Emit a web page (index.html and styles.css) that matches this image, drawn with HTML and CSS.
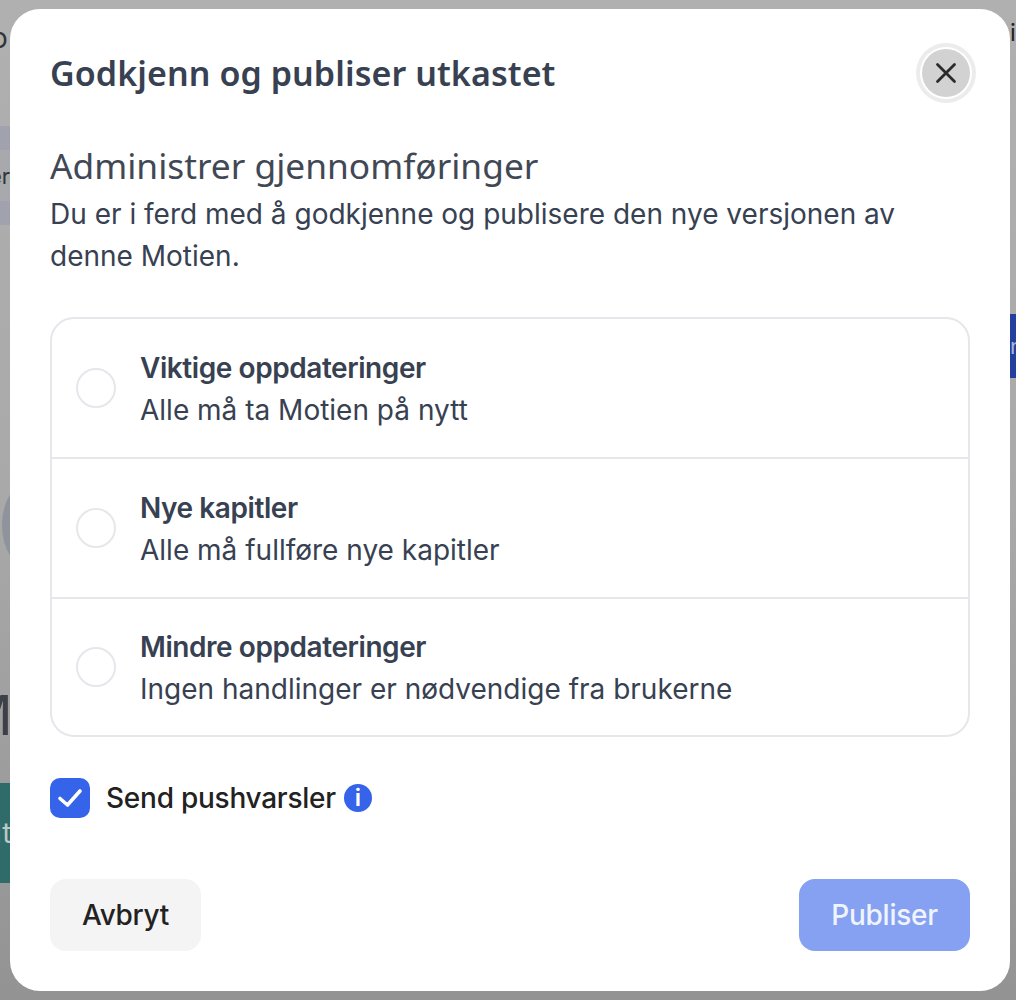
FILE: index.html
```html
<!DOCTYPE html>
<html lang="en">
<head>
    <meta charset="UTF-8">
    <meta name="viewport" content="width=device-width, initial-scale=1.0">
    <title>Godkjenn og publiser utkastet</title>
    <link rel="stylesheet" href="styles.css">
</head>
<body>
    <div class="page">
        <div class="side side-left">
            <div class="frag-letter">o</div>
            <div class="frag-band">
                <span class="frag-band-text">er</span>
            </div>
            <div class="frag-avatar"></div>
            <div class="frag-big">M</div>
            <div class="frag-teal"><span>lt</span></div>
        </div>

        <div class="modal">
            <div class="modal-header">
                <h1 class="modal-title">Godkjenn og publiser utkastet</h1>
                <button class="close-btn" aria-label="Lukk">
                    <svg width="24" height="24" viewBox="0 0 24 24" fill="none" stroke="#2b2b2b" stroke-width="2.8" stroke-linecap="round">
                        <path d="M3.5 3.5L20.5 20.5M20.5 3.5L3.5 20.5"/>
                    </svg>
                </button>
            </div>

            <h2 class="section-title">Administrer gjennomføringer</h2>
            <p class="section-text">Du er i ferd med å godkjenne og publisere den nye versjonen av denne Motien.</p>

            <div class="option-list">
                <label class="option-item">
                    <span class="radio"></span>
                    <span class="option-info">
                        <span class="option-name">Viktige oppdateringer</span>
                        <span class="option-desc">Alle må ta Motien på nytt</span>
                    </span>
                </label>
                <label class="option-item">
                    <span class="radio"></span>
                    <span class="option-info">
                        <span class="option-name">Nye kapitler</span>
                        <span class="option-desc">Alle må fullføre nye kapitler</span>
                    </span>
                </label>
                <label class="option-item">
                    <span class="radio"></span>
                    <span class="option-info">
                        <span class="option-name">Mindre oppdateringer</span>
                        <span class="option-desc">Ingen handlinger er nødvendige fra brukerne</span>
                    </span>
                </label>
            </div>

            <div class="push-row">
                <span class="checkbox">
                    <svg width="40" height="40" viewBox="0 0 40 40" fill="none" stroke="#fff" stroke-width="3.6" stroke-linecap="round" stroke-linejoin="round">
                        <path d="M10 20.5L17.5 27L30 13"/>
                    </svg>
                </span>
                <span class="push-label">Send pushvarsler</span>
                <span class="info-icon">i</span>
            </div>

            <div class="modal-footer">
                <button class="cancel-btn">Avbryt</button>
                <button class="publish-btn">Publiser</button>
            </div>
        </div>

        <div class="side side-right">
            <div class="frag-right-text">in</div>
            <div class="frag-blue"><span>n</span></div>
        </div>
    </div>
</body>
</html>
```
FILE: styles.css
```css
* {
    margin: 0;
    padding: 0;
    box-sizing: border-box;
    font-family: Inter, 'Liberation Sans', sans-serif;
}
body {
    background-color: #a9a9a9;
    overflow: hidden;
}
.page {
    display: flex;
    height: 1000px;
    padding-top: 9px;
    background: linear-gradient(180deg, #b0b0b0 0%, #a9a9a9 50%, #939393 100%);
}
.side {
    overflow: hidden;
    flex-shrink: 0;
    height: 991px;
}
.side-left {
    width: 10px;
}
.side-right {
    width: 6px;
}
.frag-letter {
    margin-left: -9px;
    margin-top: 14px;
    font-size: 28px;
    line-height: 30px;
    color: #333;
}
.frag-band {
    margin-top: 73px;
    height: 99px;
    width: 10px;
    background: linear-gradient(180deg, #a0a3ad 24%, #a8a9ac 24%, #a8a9ac 76%, #a0a3ad 76%);
    display: flex;
    align-items: center;
}
.frag-band-text {
    margin-left: -11px;
    font-size: 22px;
    color: #333;
}
.frag-avatar {
    margin-top: 255px;
    width: 60px;
    height: 90px;
    margin-left: 2px;
    border-radius: 50%;
    background-color: #8f939b;
}
.frag-big {
    margin-top: 113px;
    margin-left: -37px;
    font-size: 55px;
    line-height: 64px;
    color: #3c4148;
}
.frag-teal {
    margin-top: 36px;
    height: 100px;
    width: 10px;
    background-color: #2f6b69;
    color: #b9c9c8;
    font-size: 28px;
    line-height: 100px;
    white-space: nowrap;
}
.frag-teal span {
    margin-left: -5px;
}
.frag-right-text {
    margin-top: 9px;
    font-size: 24px;
    line-height: 30px;
    color: #222;
    white-space: nowrap;
}
.frag-blue {
    margin-top: 266px;
    height: 64px;
    width: 6px;
    background-color: #22409c;
    color: #a9b5d9;
    font-size: 22px;
    line-height: 64px;
}
.modal {
    width: 1000px;
    height: 982px;
    flex-shrink: 0;
    background-color: #fff;
    border-radius: 30px;
    padding: 36px 40px 40px 40px;
    display: flex;
    flex-direction: column;
}
.modal-header {
    display: flex;
    justify-content: space-between;
    align-items: center;
    height: 56px;
    margin-bottom: 40px;
}
.modal-title {
    font-family: 'Noto Sans', sans-serif;
    font-size: 34px;
    font-weight: 600;
    letter-spacing: 0.08px;
    color: #374151;
}
.close-btn {
    width: 48px;
    height: 48px;
    border-radius: 50%;
    background-color: #d2d2d2;
    border: none;
    box-shadow: 0 0 0 2px #fff, 0 0 0 6px #ececec;
    display: flex;
    align-items: center;
    justify-content: center;
}
.section-title {
    font-family: 'Noto Sans', sans-serif;
    font-size: 35.3px;
    font-weight: 400;
    line-height: 48px;
    color: #414855;
    margin-bottom: 4px;
}
.section-text {
    font-size: 28px;
    line-height: 42px;
    color: #374151;
    margin-bottom: 40px;
}
.option-list {
    border: 2px solid #e5e7eb;
    border-radius: 24px;
}
.option-item {
    display: flex;
    align-items: center;
    height: 140px;
    padding-left: 24px;
    border-bottom: 2px solid #e5e7eb;
}
.option-item:last-child {
    border-bottom: none;
    height: 136px;
}
.radio {
    width: 40px;
    height: 40px;
    border-radius: 50%;
    border: 2px solid #e5e7eb;
    margin-right: 24px;
}
.option-info {
    display: flex;
    flex-direction: column;
    padding-top: 1px;
}
.option-name {
    font-size: 28px;
    font-weight: 600;
    letter-spacing: -0.43px;
    line-height: 42px;
    color: #374151;
}
.option-desc {
    font-size: 28px;
    line-height: 42px;
    color: #374151;
}
.push-row {
    display: flex;
    align-items: center;
    margin-top: 41px;
}
.checkbox {
    width: 40px;
    height: 40px;
    border-radius: 10px;
    background-color: #3563e9;
    display: flex;
    align-items: center;
    justify-content: center;
    margin-right: 16px;
}
.push-label {
    font-size: 28px;
    font-weight: 500;
    letter-spacing: -0.25px;
    color: #222;
    margin-right: 8px;
}
.info-icon {
    width: 28px;
    height: 28px;
    border-radius: 50%;
    background-color: #3563e9;
    color: #fff;
    font-size: 24px;
    font-weight: 600;
    line-height: 28px;
    text-align: center;
}
.modal-footer {
    display: flex;
    justify-content: space-between;
    margin-top: auto;
}
.cancel-btn {
    width: 151px;
    height: 72px;
    background-color: #f4f4f4;
    border: none;
    border-radius: 16px;
    font-size: 28px;
    font-weight: 500;
    letter-spacing: -0.3px;
    color: #222;
}
.publish-btn {
    width: 171px;
    height: 72px;
    background-color: #86a1f1;
    border: none;
    border-radius: 16px;
    font-size: 28px;
    font-weight: 500;
    letter-spacing: -0.25px;
    color: #f0f4fe;
}
```
